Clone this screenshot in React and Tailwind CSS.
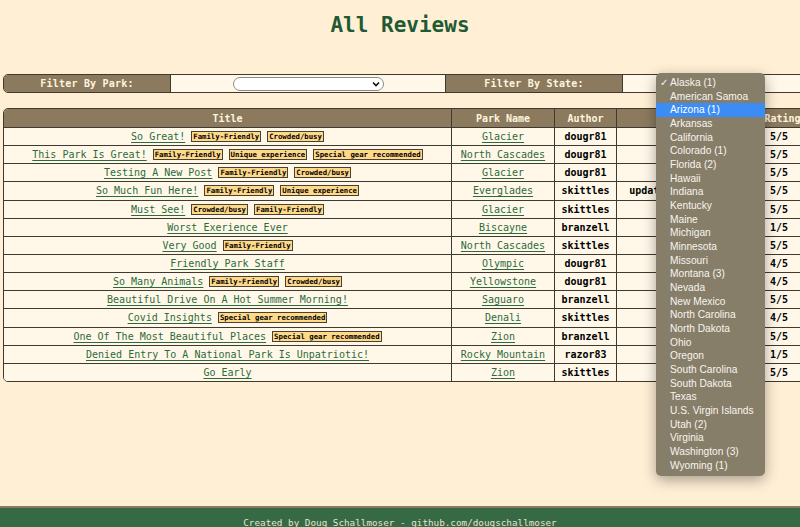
import React from 'react';

const reviews = [
  { title: "So Great!", tags: ["Family-Friendly", "Crowded/busy"], park: "Glacier", author: "dougr81", date: "11/12/2020", rating: "5/5" },
  { title: "This Park Is Great!", tags: ["Family-Friendly", "Unique experience", "Special gear recommended"], park: "North Cascades", author: "dougr81", date: "11/10/2020", rating: "5/5" },
  { title: "Testing A New Post", tags: ["Family-Friendly", "Crowded/busy"], park: "Glacier", author: "dougr81", date: "11/02/2020", rating: "5/5" },
  { title: "So Much Fun Here!", tags: ["Family-Friendly", "Unique experience"], park: "Everglades", author: "skittles", date: "updated: 10/16/2020", rating: "5/5" },
  { title: "Must See!", tags: ["Crowded/busy", "Family-Friendly"], park: "Glacier", author: "skittles", date: "9/29/2020 ", rating: "5/5" },
  { title: "Worst Exerience Ever", tags: [], park: "Biscayne", author: "branzell", date: "9/28/2020 ", rating: "1/5" },
  { title: "Very Good", tags: ["Family-Friendly"], park: "North Cascades", author: "skittles", date: "9/27/2020 ", rating: "5/5" },
  { title: "Friendly Park Staff", tags: [], park: "Olympic", author: "dougr81", date: "10/14/2020", rating: "4/5" },
  { title: "So Many Animals", tags: ["Family-Friendly", "Crowded/busy"], park: "Yellowstone", author: "dougr81", date: "10/13/2020", rating: "4/5" },
  { title: "Beautiful Drive On A Hot Summer Morning!", tags: [], park: "Saguaro", author: "branzell", date: "10/12/2020", rating: "5/5" },
  { title: "Covid Insights", tags: ["Special gear recommended"], park: "Denali", author: "skittles", date: "10/11/2020", rating: "4/5" },
  { title: "One Of The Most Beautiful Places", tags: ["Special gear recommended"], park: "Zion", author: "branzell", date: "10/10/2020", rating: "5/5" },
  { title: "Denied Entry To A National Park Is Unpatriotic!", tags: [], park: "Rocky Mountain", author: "razor83", date: "10/09/2020", rating: "1/5" },
  { title: "Go Early", tags: [], park: "Zion", author: "skittles", date: "10/08/2020", rating: "5/5" },
];

const states = [
  "Alaska (1)", "American Samoa", "Arizona (1)", "Arkansas", "California", "Colorado (1)",
  "Florida (2)", "Hawaii", "Indiana", "Kentucky", "Maine", "Michigan", "Minnesota",
  "Missouri", "Montana (3)", "Nevada", "New Mexico", "North Carolina", "North Dakota",
  "Ohio", "Oregon", "South Carolina", "South Dakota", "Texas", "U.S. Virgin Islands",
  "Utah (2)", "Virginia", "Washington (3)", "Wyoming (1)"
];

export default function App() {
  return (
    <div className="relative w-[800px] h-[527px] overflow-hidden bg-[#ffefd5] font-['DejaVu_Sans_Mono',monospace]">
      <main className="min-h-[506px] pt-[11px]">
        <h1 className="text-center text-[21px] leading-[28px] font-bold text-[#1f5a34]">All Reviews</h1>

        {/* FILTER BAR */}
        <div className="mt-[35px] ml-[3px] w-[900px] h-[19px] flex border border-[#3f3a30] rounded-l-[5px] overflow-hidden text-[10px] font-bold">
          <div className="w-[167px] flex items-center justify-center bg-[#8b7a5e] text-[#fff4df] border-r border-[#3f3a30] tracking-[0.2px]">Filter By Park:</div>
          <div className="w-[275px] flex items-center justify-center bg-[#fff8e8] border-r border-[#3f3a30]">
            <div className="w-[151px] h-[14px] rounded-full border border-[#8c8a86] bg-white flex items-center justify-end pr-[3px]">
              <svg width="8" height="6" viewBox="0 0 8 6"><path d="M1 1.5 L4 4.5 L7 1.5" fill="none" stroke="#111" strokeWidth="1.6" /></svg>
            </div>
          </div>
          <div className="w-[177px] flex items-center justify-center bg-[#8b7a5e] text-[#fff4df] border-r border-[#3f3a30] tracking-[0.2px]">Filter By State:</div>
          <div className="flex-1 bg-[#fff8e8]"></div>
        </div>

        {/* REVIEWS TABLE */}
        <div className="mt-[15px] ml-[3px] w-[806px] border border-[#3f3a30] rounded-l-[5px] overflow-hidden">
          <table className="w-full table-fixed border-separate border-spacing-0 text-[10px]">
            <colgroup>
              <col className="w-[447px]" />
              <col className="w-[103px]" />
              <col className="w-[62px]" />
              <col className="w-[140px]" />
              <col />
            </colgroup>
            <thead>
              <tr className="h-[18px] bg-[#8b7a5e] text-[#fff4df] font-bold">
                <th className="p-0">Title</th>
                <th className="p-0 border-l border-[#3f3a30]">Park Name</th>
                <th className="p-0 border-l border-[#3f3a30]">Author</th>
                <th className="p-0 border-l border-[#3f3a30]">Date</th>
                <th className="p-0 border-l border-[#3f3a30]">Rating</th>
              </tr>
            </thead>
            <tbody className="bg-[#fff8e8]">
              {reviews.map((r, i) => (
                <tr key={i} className="h-[18.15px]">
                  <td className="p-0 border-t border-[#3f3a30] text-center whitespace-nowrap">
                    <a href="#" className="text-[#2c6a3d] underline underline-offset-[2px]">{r.title}</a>
                    {r.tags.map((t) => (
                      <span key={t} className="inline-block align-[1px] ml-[6px] px-[1px] bg-[#ffd98a] border border-[#4a4030] text-black text-[7.3px] leading-[9px] font-bold">{t}</span>
                    ))}
                  </td>
                  <td className="p-0 border-t border-l border-[#3f3a30] text-center">
                    <a href="#" className="text-[#2c6a3d] underline underline-offset-[2px]">{r.park}</a>
                  </td>
                  <td className="p-0 border-t border-l border-[#3f3a30] text-center font-bold text-black">{r.author}</td>
                  <td className="p-0 border-t border-l border-[#3f3a30] text-center font-bold text-black whitespace-nowrap">{r.date}</td>
                  <td className="p-0 border-t border-l border-[#3f3a30] text-left pl-[13px] font-bold text-black">{r.rating}</td>
                </tr>
              ))}
            </tbody>
          </table>
        </div>
      </main>

      <footer className="border-t-2 border-[#8b7a5e] bg-[#356a45] pt-[8px] pb-[10px] text-center text-[9.3px] text-[#e8e2cc]">
        Created by Doug Schallmoser - <a href="#" className="underline">github.com/dougschallmoser</a>
      </footer>

      {/* OPEN STATE SELECT MENU */}
      <div className="absolute left-[656px] top-[73px] w-[109px] h-[403px] pt-[3px] rounded-[5px] bg-[#877e6a] shadow-[0_4px_14px_rgba(0,0,0,0.35)] font-['Liberation_Sans',Arial,sans-serif] text-[10.2px] text-[#f7f4ec]">
        {states.map((s, i) => (
          <div key={s} className={`relative h-[13.68px] leading-[13.68px] pl-[14px] ${i === 2 ? 'bg-[#3b8cf5] text-white' : ''}`}>
            {i === 0 && <span className="absolute left-[4px] top-0">✓</span>}
            {s}
          </div>
        ))}
      </div>
    </div>
  );
}
